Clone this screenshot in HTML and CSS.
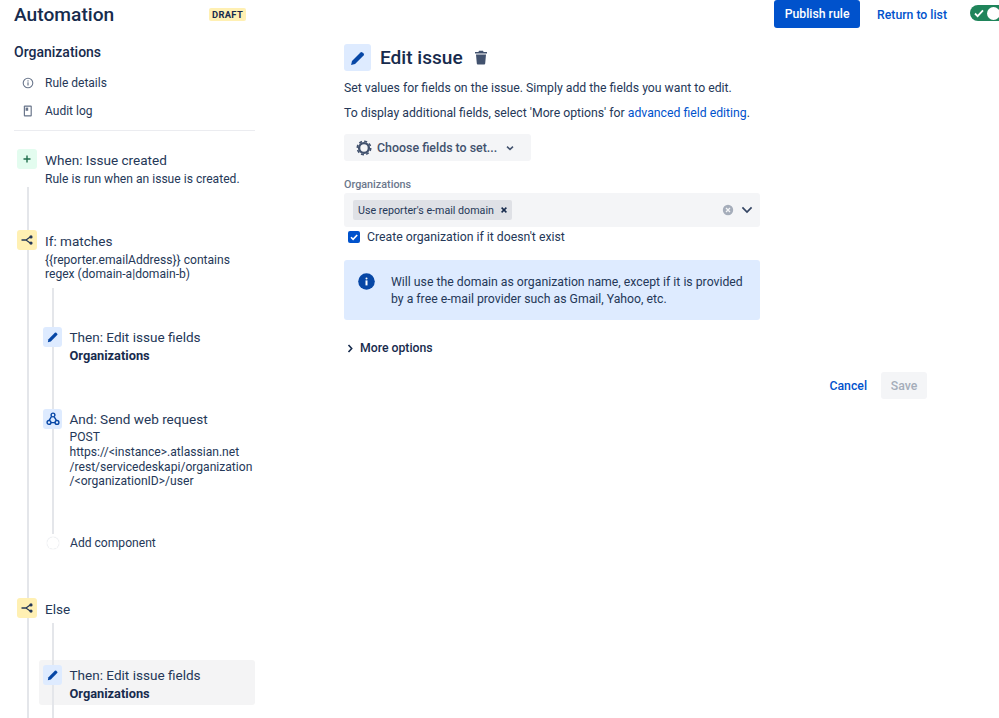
FILE: index.html
```html
<!DOCTYPE html>
<html lang="en">
<head>
<meta charset="utf-8">
<title>Automation</title>
<link rel="stylesheet" href="styles.css">
</head>
<body>
<div class="app">
  <header class="topbar">
    <div class="brand">
      <h1 class="brand-title">Automation</h1>
      <span class="lozenge">DRAFT</span>
    </div>
    <div class="actions">
      <button class="btn-primary">Publish rule</button>
      <a class="return-link" href="#">Return to list</a>
      <span class="toggle">
        <svg class="toggle-check" width="12" height="12" viewBox="0 0 12 12"><path d="M2 6.5l2.6 2.6L10 3.4" fill="none" stroke="#fff" stroke-width="1.8"/></svg>
        <span class="toggle-knob"></span>
      </span>
    </div>
  </header>
  <div class="body">
    <aside class="sidebar">
      <h2 class="rule-name">Organizations</h2>
      <nav class="side-nav">
        <a class="nav-item" href="#">
          <svg class="nav-icon" width="12" height="12" viewBox="0 0 12 12"><circle cx="6" cy="6" r="4.8" fill="none" stroke="#6b778c" stroke-width="1.1"/><rect x="5.4" y="5.3" width="1.2" height="3.2" fill="#6b778c"/><rect x="5.4" y="3.3" width="1.2" height="1.2" fill="#6b778c"/></svg>
          Rule details
        </a>
        <a class="nav-item" href="#">
          <svg class="nav-icon" width="12" height="12" viewBox="0 0 12 12"><rect x="1.8" y="0.6" width="8" height="10.8" rx="1" fill="#6b778c"/><rect x="3" y="1.8" width="5.6" height="8.4" fill="#fff"/><rect x="3.6" y="2.6" width="2.6" height="3.2" fill="#6b778c"/></svg>
          Audit log
        </a>
      </nav>
      <div class="timeline">
        <div class="step step-when">
          <span class="icon icon-green">
            <svg width="10" height="10" viewBox="0 0 10 10"><path d="M5 1.5v7M1.5 5h7" stroke="#216e4e" stroke-width="1.4"/></svg>
          </span>
          <div class="step-text">
            <div class="step-title">When: Issue created</div>
            <div class="step-desc">Rule is run when an issue is created.</div>
          </div>
        </div>
        <div class="step step-if">
          <span class="icon icon-yellow">
            <svg width="13" height="12" viewBox="0 0 13 12"><path d="M0.5 6h4.5M5 6L9.5 2.8M5 6L9.5 9.2" fill="none" stroke="#253858" stroke-width="1.3"/><circle cx="10" cy="2.9" r="1.6" fill="#253858"/><circle cx="10" cy="9.1" r="1.6" fill="#253858"/></svg>
          </span>
          <div class="step-text">
            <div class="step-title">If: matches</div>
            <div class="step-desc">{{reporter.emailAddress}} contains<br>regex (domain-a|domain-b)</div>
          </div>
        </div>
        <div class="branch branch-if">
          <div class="step step-child">
            <span class="icon icon-blue">
              <svg width="12" height="12" viewBox="0 0 12 12"><path d="M0.8 11.2l0.7-3L7.9 1.8a1 1 0 0 1 1.4 0l0.9 0.9a1 1 0 0 1 0 1.4L3.8 10.5z" fill="#0747a6"/></svg>
            </span>
            <div class="step-text">
              <div class="step-title">Then: Edit issue fields</div>
              <div class="step-strong">Organizations</div>
            </div>
          </div>
          <div class="step step-child step-web">
            <span class="icon icon-blue">
              <svg width="14" height="14" viewBox="0 0 14 14"><g fill="none" stroke="#0747a6" stroke-width="1.4"><circle cx="7" cy="3" r="1.9"/><circle cx="3" cy="10.4" r="1.9"/><circle cx="11" cy="10.4" r="1.9"/><path d="M5.4 4.6L3.2 8.4M8.2 4.8l2.2 3.6M5 10.6h4.2"/></g></svg>
            </span>
            <div class="step-text">
              <div class="step-title">And: Send web request</div>
              <div class="step-desc">POST<br>https://&lt;instance&gt;.atlassian.net<br>/rest/servicedeskapi/organization<br>/&lt;organizationID&gt;/user</div>
            </div>
          </div>
          <div class="add-row">
            <span class="add-dot"></span>
            <span class="add-label">Add component</span>
          </div>
        </div>
        <div class="step step-else">
          <span class="icon icon-yellow">
            <svg width="13" height="12" viewBox="0 0 13 12"><path d="M0.5 6h4.5M5 6L9.5 2.8M5 6L9.5 9.2" fill="none" stroke="#253858" stroke-width="1.3"/><circle cx="10" cy="2.9" r="1.6" fill="#253858"/><circle cx="10" cy="9.1" r="1.6" fill="#253858"/></svg>
          </span>
          <div class="step-text">
            <div class="step-title">Else</div>
          </div>
        </div>
        <div class="branch branch-else">
          <div class="step step-child step-selected">
            <span class="icon icon-blue">
              <svg width="12" height="12" viewBox="0 0 12 12"><path d="M0.8 11.2l0.7-3L7.9 1.8a1 1 0 0 1 1.4 0l0.9 0.9a1 1 0 0 1 0 1.4L3.8 10.5z" fill="#0747a6"/></svg>
            </span>
            <div class="step-text">
              <div class="step-title">Then: Edit issue fields</div>
              <div class="step-strong">Organizations</div>
            </div>
          </div>
        </div>
      </div>
    </aside>
    <main class="panel">
      <div class="panel-head">
        <span class="panel-icon">
          <svg width="16" height="16" viewBox="0 0 12 12"><path d="M0.8 11.2l0.7-3L7.9 1.8a1 1 0 0 1 1.4 0l0.9 0.9a1 1 0 0 1 0 1.4L3.8 10.5z" fill="#0747a6"/></svg>
        </span>
        <h2 class="panel-title">Edit issue</h2>
        <svg class="trash" width="14" height="15" viewBox="0 0 14 15"><path d="M5 0.8h4l0.6 1.2H13v1.6H1V2h3.4z" fill="#42526e"/><path d="M2 4.6h10l-0.8 9a1 1 0 0 1-1 0.9H3.8a1 1 0 0 1-1-0.9z" fill="#42526e"/></svg>
      </div>
      <p class="para">Set values for fields on the issue. Simply add the fields you want to edit.</p>
      <p class="para para-2">To display additional fields, select 'More options' for <a class="link" href="#">advanced field editing</a>.</p>
      <button class="choose">
        <svg width="16" height="16" viewBox="0 0 16 16"><circle cx="8" cy="8" r="4.9" fill="none" stroke="#42526e" stroke-width="2.4"/><circle cx="8" cy="8" r="6.7" fill="none" stroke="#42526e" stroke-width="1.6" stroke-dasharray="3 2.26"/></svg>
        <span>Choose fields to set...</span>
        <svg class="choose-chev" width="10" height="10" viewBox="0 0 10 10"><path d="M2 3.6L5 6.4 8 3.6" fill="none" stroke="#42526e" stroke-width="1.5"/></svg>
      </button>
      <label class="field-label">Organizations</label>
      <div class="select">
        <span class="tag">Use reporter's e-mail domain
          <svg class="tag-x" width="8" height="8" viewBox="0 0 8 8"><path d="M1.6 1.6l4.8 4.8M6.4 1.6L1.6 6.4" stroke="#172b4d" stroke-width="1.5"/></svg>
        </span>
        <svg class="select-clear" width="12" height="12" viewBox="0 0 12 12"><circle cx="6" cy="6" r="5.2" fill="#a5adba"/><path d="M4 4l4 4M8 4L4 8" stroke="#f4f5f7" stroke-width="1.3"/></svg>
        <svg class="select-chev" width="12" height="8" viewBox="0 0 12 8"><path d="M1.4 1.4L6 6l4.6-4.6" fill="none" stroke="#344563" stroke-width="1.7"/></svg>
      </div>
      <div class="check-row">
        <span class="checkbox">
          <svg width="10" height="10" viewBox="0 0 10 10"><path d="M2 5.2l2.1 2.1L8.2 3" fill="none" stroke="#fff" stroke-width="1.6"/></svg>
        </span>
        <span class="check-label">Create organization if it doesn't exist</span>
      </div>
      <div class="info">
        <svg class="info-icon" width="17" height="17" viewBox="0 0 17 17"><circle cx="8.5" cy="8.5" r="8.3" fill="#0747a6"/><rect x="7.5" y="7.4" width="2" height="5" fill="#fff"/><rect x="7.5" y="4.4" width="2" height="2" rx="1" fill="#fff"/></svg>
        <p class="info-text">Will use the domain as organization name, except if it is provided by a free e-mail provider such as Gmail, Yahoo, etc.</p>
      </div>
      <div class="more">
        <svg width="7" height="9" viewBox="0 0 7 9"><path d="M1.5 1l3.2 3.5L1.5 8" fill="none" stroke="#172b4d" stroke-width="1.6"/></svg>
        <span>More options</span>
      </div>
      <div class="form-actions">
        <a class="cancel" href="#">Cancel</a>
        <button class="save" disabled>Save</button>
      </div>
    </main>
  </div>
</div>
</body>
</html>
```
FILE: styles.css
```css
* { box-sizing: border-box; }
html, body { margin: 0; padding: 0; background: #fff; }
body { font-family: Roboto, "Liberation Sans", sans-serif; color: #172b4d; }
.app { width: 999px; height: 718px; overflow: hidden; }
h1, h2, p { margin: 0; }
a { text-decoration: none; }
button { font-family: inherit; border: 0; }

.topbar { display: flex; align-items: flex-start; height: 28px; width: 1010px; padding-left: 14px; }
.brand { display: flex; align-items: flex-start; width: 232px; justify-content: space-between; }
.brand-title { font-size: 19.2px; line-height: 28px; font-weight: 500; margin-top: 1px; }
.lozenge { margin-top: 8px; background: #fff0b3; color: #172b4d; font-size: 9.4px; line-height: 13px; font-weight: 700; padding: 0 3px; border-radius: 2px; letter-spacing: 0.3px; }
.actions { display: flex; align-items: center; margin-left: auto; height: 28px; }
.btn-primary { width: 86px; height: 28px; background: #0052cc; color: #fff; font-size: 12.25px; font-weight: 500; border-radius: 3px; padding: 0; }
.return-link { margin-left: 17px; padding-top: 2px; color: #0052cc; font-size: 12.25px; font-weight: 500; }
.toggle { margin-left: 23px; margin-bottom: 2px; width: 40px; height: 16px; border-radius: 8px; background: #1f845a; position: relative; display: block; }
.toggle-check { position: absolute; left: 3px; top: 2px; }
.toggle-knob { position: absolute; left: 17px; top: 1.5px; width: 13px; height: 13px; border-radius: 50%; background: #fff; }

.body { display: flex; }
.sidebar { width: 255px; margin-left: 14px; flex: none; }
.rule-name { font-size: 14px; line-height: 20px; font-weight: 500; margin-top: 14px; }
.side-nav { display: flex; flex-direction: column; padding: 7px 0 0; height: 69px; border-bottom: 1px solid #ebecf0; width: 241px; }
.nav-item { display: flex; align-items: center; height: 28px; color: #253858; font-size: 12px; padding-left: 8px; }
.nav-icon { margin-right: 11px; }

.timeline { position: relative; margin-left: -14px; width: 255px; }
.timeline::before { content: ""; position: absolute; left: 27px; top: 38px; bottom: -200px; width: 1.5px; background: #e4e6ea; }
.step { display: flex; position: relative; gap: 8px; }
.icon { flex: none; display: flex; align-items: center; justify-content: center; width: 20px; height: 20px; border-radius: 3px; position: relative; z-index: 2; }
.icon-green { background: #e3fcef; }
.icon-yellow { background: #fff0b3; }
.icon-blue { background: #deebff; width: 19px; height: 20px; }
.step-title { font-size: 13.55px; line-height: 20px; color: #253858; }
.step-desc { font-size: 12.1px; line-height: 14.7px; color: #253858; margin-top: 1px; }
.step-strong { font-size: 12.8px; line-height: 16px; font-weight: 700; color: #172b4d; margin-top: 1px; }
.step-when { margin-left: 17px; margin-top: 18px; }
.step-when .step-text, .step-if .step-text, .step-else .step-text { padding-top: 1px; }
.step-if { margin-left: 17px; margin-top: 43px; }
.step-if .step-desc, .step-when .step-desc { margin-top: 2px; }
.branch { position: relative; margin-left: 43px; }
.branch::before { content: ""; position: absolute; left: 9px; width: 1.5px; background: #e4e6ea; z-index: 1; }
.branch-if { padding-top: 45px; }
.branch-if::before { top: 6px; height: 246px; }
.branch-else::before { top: 4px; height: 200px; }
.step-web { margin-top: 45px; }
.step-child { gap: 7.5px; }
.add-row { display: flex; align-items: center; gap: 8px; margin-top: 44px; height: 20px; position: relative; z-index: 2; }
.add-dot { flex: none; width: 12px; height: 12px; margin: 0 3.5px; border-radius: 50%; background: #fff; box-shadow: 0 0 1px #c1c7d0; }
.add-label { font-size: 12.1px; color: #253858; margin-left: 0; }
.step-else { margin-left: 17px; margin-top: 45px; }
.branch-else { padding-top: 41px; }
.step-selected { margin-left: -4px; width: 216px; padding: 5px 4px 0; height: 45px; background: #f4f4f5; border-radius: 3px; }

.panel { margin-left: 75px; width: 416px; padding-top: 16px; flex: none; }
.panel-head { display: flex; align-items: center; height: 27px; }
.panel-icon { width: 27px; height: 27px; background: #deebff; border-radius: 3px; display: flex; align-items: center; justify-content: center; }
.panel-title { font-size: 19.1px; font-weight: 500; line-height: 28px; margin-left: 9px; }
.trash { margin-left: 11px; }
.para { font-size: 12.25px; line-height: 20px; color: #253858; white-space: nowrap; }
.panel-head + .para { margin-top: 7px; }
.para-2 { margin-top: 5px; }
.link { color: #0052cc; }
.choose { display: flex; align-items: center; margin-top: 11px; width: 187px; height: 27px; background: #f4f5f7; border-radius: 3px; padding: 0 0 0 12px; color: #42526e; font-size: 12.4px; font-weight: 500; }
.choose span { margin-left: 5px; }
.choose-chev { margin-left: 8px; }
.field-label { display: block; margin-top: 17px; font-size: 10.8px; line-height: 13px; font-weight: 500; color: #6b778c; }
.select { display: flex; align-items: center; margin-top: 2px; height: 34px; background: #f4f5f7; border-radius: 3px; padding: 0 7px 0 9px; }
.tag { display: flex; align-items: center; height: 20px; background: #dfe1e6; border-radius: 2px; font-size: 10.7px; color: #253858; padding: 0 4px 0 5px; gap: 6px; }
.select-clear { margin-left: auto; }
.select-chev { margin-left: 7px; }
.check-row { display: flex; align-items: center; height: 20px; padding-left: 4px; gap: 7px; }
.checkbox { width: 12px; height: 12px; border-radius: 2px; background: #0052cc; display: flex; align-items: center; justify-content: center; }
.check-label { font-size: 12.25px; color: #253858; }
.info { display: flex; margin-top: 13px; height: 60px; background: #deebff; border-radius: 3px; padding: 14px 14px 0; gap: 16px; }
.info-icon { flex: none; margin-top: -1px; }
.info-text { font-size: 12.25px; line-height: 17px; color: #253858; }
.more { display: flex; align-items: center; margin-top: 18px; height: 20px; padding-left: 3px; gap: 6px; font-size: 12.25px; font-weight: 500; }
.form-actions { display: flex; align-items: center; justify-content: flex-end; margin-top: 14px; width: 583px; gap: 14px; }
.cancel { color: #0052cc; font-size: 12.25px; font-weight: 500; }
.save { width: 46px; height: 27px; background: #f4f5f7; color: #a5adba; font-size: 12.25px; font-weight: 500; border-radius: 3px; padding: 0; }
```
